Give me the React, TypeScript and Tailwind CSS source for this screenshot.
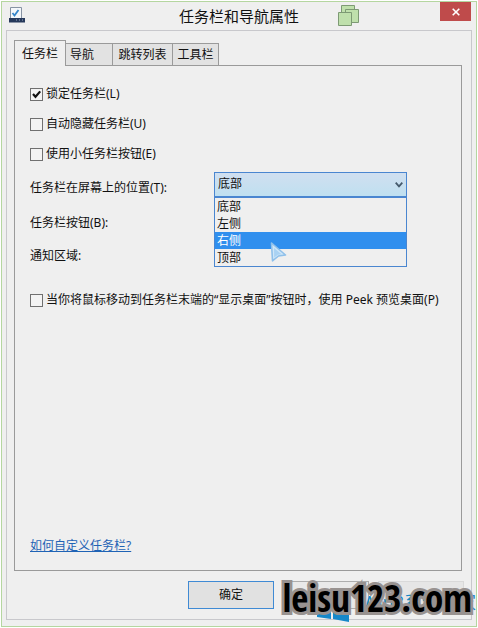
import { useState } from "react";

const tabs = [
  { name: "任务栏", width: "w-[52px]", align: "text-center" },
  { name: "导航", width: "w-[47px]", align: "pl-1 text-left" },
  { name: "跳转列表", width: "w-[60px]", align: "text-center" },
  { name: "工具栏", width: "w-[46px]", align: "text-center" },
];

const positions = ["底部", "左侧", "右侧", "顶部"];

const Option = ({ label, checked = false }: { label: string; checked?: boolean }) => (
  <label className="flex h-5 items-center gap-[3px] whitespace-nowrap">
    <span className="relative block size-[13px] shrink-0">
      <input
        type="checkbox"
        defaultChecked={checked}
        className="peer block size-[13px] appearance-none border border-[#707070] bg-[#f3f3f3]"
      />
      <svg viewBox="0 0 13 13" className="pointer-events-none absolute inset-0 hidden size-[13px] peer-checked:block">
        <path d="M3 6 5.5 8.8 10.2 3.4" fill="none" stroke="#111" strokeWidth="2.2" />
      </svg>
    </span>
    {label}
  </label>
);

const TaskbarIcon = () => (
  <svg viewBox="0 0 16 16" className="size-4">
    <path d="M1.5 0.5H12.5V12H1.5Z" fill="#f4f7fa" stroke="#8793a3" />
    <path d="M3.5 6 5.5 8.5 9.5 3" fill="none" stroke="#3585c9" strokeWidth="1.8" />
    <path d="M0 11H16V15.5H0Z" fill="#26395b" />
    <path d="M7 13h1M10 13h1M13 13h1" stroke="#9baac3" strokeWidth="1.2" />
  </svg>
);

const StackIcon = () => (
  <svg viewBox="0 0 21 21" className="h-[21px] w-[21px]">
    <g fill="#bfe0ac" stroke="#7d9a74">
      <path d="M3.5 0.5h13v13h-13z" />
      <path d="M7.5 4.5h13v13h-13z" />
      <path d="M0.5 7.5h13v13h-13z" />
    </g>
  </svg>
);

const App = () => {
  const [tab, setTab] = useState("任务栏");
  const [position, setPosition] = useState("右侧");

  return (
    <div className="flex min-h-screen flex-col bg-white p-px font-['Noto_Sans','Noto_Sans_CJK_SC',sans-serif] text-xs text-[#111]">
      <div className="relative flex grow flex-col border border-[#b5d6a0] bg-[#efefef] px-1 pb-1.5">
        {/* Title bar */}
        <header className="relative flex h-7 shrink-0 items-center justify-center">
          <div className="absolute top-[5px] left-[3px]">
            <TaskbarIcon />
          </div>
          <h1 className="text-[15px]">任务栏和导航属性</h1>
          <div className="absolute top-[3px] right-[113px]">
            <StackIcon />
          </div>
          <button
            aria-label="关闭"
            className="absolute top-0 right-px flex h-[19px] w-[31px] items-center justify-center bg-[#bf4b4b]"
          >
            <svg viewBox="0 0 8 8" className="size-2">
              <path d="M0.7 0.7 7.3 7.3M7.3 0.7 0.7 7.3" stroke="#fff" strokeWidth="1.6" />
            </svg>
          </button>
        </header>

        <main className="flex grow flex-col border border-[#c8c8cc] px-[7px] pt-[9px] pb-[10px]">
          {/* Tabs */}
          <nav role="tablist" className="flex h-[25px] shrink-0 items-end">
            {tabs.map(({ name, width, align }) => (
              <button
                key={name}
                role="tab"
                aria-selected={tab === name}
                onClick={() => setTab(name)}
                className={`${width} ${align} shrink-0 whitespace-nowrap border-[#9a9a9a] ${
                  tab === name
                    ? "relative -mb-px h-[26px] border border-b-0 bg-[#efefef]"
                    : "h-[22px] border-t border-r bg-[#e2e2e2]"
                }`}
              >
                {name}
              </button>
            ))}
          </nav>

          <section className="mr-0.5 flex grow flex-col border border-[#9a9a9a] px-[15px] pt-[18px] pb-4">
            <div className="flex flex-col gap-2.5">
              <Option label="锁定任务栏(L)" checked />
              <Option label="自动隐藏任务栏(U)" />
              <Option label="使用小任务栏按钮(E)" />
            </div>

            <div className="mt-[7px] flex h-[26px] items-center">
              <label htmlFor="position" className="w-[184px] shrink-0 pt-2">
                任务栏在屏幕上的位置(T):
              </label>
              <div className="relative w-[193px]">
                <select
                  id="position"
                  defaultValue="底部"
                  className="block h-[25px] w-full appearance-none border border-[#4a86d0] bg-linear-to-b from-[#d0dff0] to-[#bfe0f0] px-[3px]"
                >
                  {positions.map((name) => (
                    <option key={name}>{name}</option>
                  ))}
                </select>
                <svg viewBox="0 0 8 6" className="pointer-events-none absolute top-[10px] right-1 h-1.5 w-2">
                  <path d="M0.7 0.7 4 4.3 7.3 0.7" fill="none" stroke="#455a6c" strokeWidth="1.8" />
                </svg>
                <div
                  role="listbox"
                  className="absolute top-full left-0 z-10 flex w-full flex-col border border-[#4a86d0] bg-[#efefef]"
                >
                  {positions.map((name) => (
                    <button
                      key={name}
                      role="option"
                      aria-selected={position === name}
                      onClick={() => setPosition(name)}
                      className={`h-[17px] px-0.5 text-left leading-[17px] ${
                        position === name ? "bg-[#308fee] text-white" : ""
                      }`}
                    >
                      {name}
                    </button>
                  ))}
                </div>
                {/* Pointer */}
                <svg viewBox="0 0 17 20" className="pointer-events-none absolute top-[70px] left-14 z-20 h-5 w-[17px]">
                  <path d="M1.5 1 15.5 13 8.5 14 2.5 18.8Z" fill="#cfe6f8" stroke="#8fc0ea" strokeWidth="1.6" strokeLinejoin="round" />
                  <path d="M4 6 11.5 12.2 7.8 12.8 4.2 15.5Z" fill="#a9d2f3" />
                </svg>
              </div>
            </div>
            <p className="mt-4 h-5 leading-5">任务栏按钮(B):</p>
            <p className="mt-[13px] h-5 leading-5">通知区域:</p>
            <div className="mt-6">
              <Option label="当你将鼠标移动到任务栏末端的“显示桌面”按钮时，使用 Peek 预览桌面(P)" />
            </div>
            <a href="#" className="mt-auto self-start text-[#1f63b5] underline">
              如何自定义任务栏?
            </a>
          </section>

          <footer className="mt-2.5 flex h-7 justify-end gap-[9px]">
            <button className="w-[86px] border border-[#3f8ad4] bg-[#e1e1e1]">确定</button>
            <button aria-label="取消" className="w-[86px] border border-[#adadad] bg-[#e9e9e9]" />
            <button aria-label="应用" disabled className="w-[86px] border border-[#d9d9d9] bg-[#e6e6e6]" />
          </footer>
        </main>

        {/* Watermark */}
        <div className="pointer-events-none absolute right-0 bottom-1 flex items-end text-[#1688c9]">
          <svg viewBox="0 0 32 34" className="h-[34px] w-8">
            <path d="M0 5 14 3V16H0ZM16 3 32 0V16H16ZM0 18H14V31L0 29ZM16 18H32V34L16 31Z" fill="currentColor" />
          </svg>
          <span className="pb-2 pl-3 text-lg leading-6 whitespace-nowrap">Win8系统之家</span>
        </div>
        <p className="pointer-events-none absolute right-1 bottom-1 font-['Open_Sans_Condensed',sans-serif] text-[37px] leading-[48px] font-semibold text-black [-webkit-text-stroke:6px_#989290] [paint-order:stroke] [stroke-linejoin:round]">
          leisu123.com
        </p>
      </div>
    </div>
  );
};

export default App;
